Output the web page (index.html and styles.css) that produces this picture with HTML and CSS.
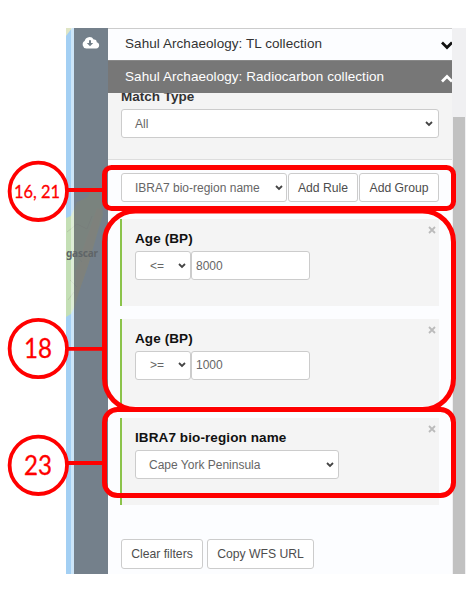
FILE: index.html
```
<!DOCTYPE html>
<html lang="en">
<head>
<meta charset="utf-8">
<title>Sahul Archaeology filters</title>
<link rel="stylesheet" href="styles.css">
</head>
<body>
<div class="app">
  <div class="map">
    <svg class="terrain" width="42" height="546" viewBox="66 28 42 546">
      <rect x="66" y="28" width="42" height="546" fill="#a3cff3"/>
      <path d="M66 28H72L66 36Z" fill="#dfe5c5"/>
      <path d="M66 218L71 216 77 202 88 197 92 187 95 186 99 192 102 204 103 215 99 228 94 245 87 269 80 289 75 306 71 314 66 317Z" fill="#c4dfb5"/>
      <path d="M97 208L102 210 98 228 89 262 79 291 75 302 76 270Z" fill="#d8d8ab"/>
      <path d="M67 232L77 224 87 229 92 216M66 258L74 252 82 262M70 280L77 287M68 300L74 292" fill="none" stroke="#b6c8a8"/>
    </svg>
    <div class="edge"></div>
    <div class="rail">
      <svg class="cloud" width="18" height="13" viewBox="0 0 18 13"><path d="M4.3 12.5A4 4 0 0 1 2.6 5.1 5 5 0 0 1 11.7 3.4 2.8 2.8 0 0 1 14.7 6.2 3.2 3.2 0 0 1 14.2 12.5Z" fill="#fff"/><path d="M7 4.2H9V7H11.2L8 10.3 4.8 7H7Z" fill="#74808a"/></svg>
    </div>
    <span class="place">gascar</span>
  </div>
  <main class="panel">
    <header class="bar"><span>Sahul Archaeology: TL collection</span><svg class="toggle" width="11" height="9" viewBox="0 0 11 9"><path d="M1 1.5L6 6.5 11 1.5"/></svg></header>
    <header class="bar active"><span>Sahul Archaeology: Radiocarbon collection</span><svg class="toggle" width="11" height="9" viewBox="0 0 11 9"><path d="M1 7.5L6 2.5 11 7.5"/></svg></header>
    <section class="match">
      <label>Match Type</label>
      <div class="field"><span>All</span><svg class="chev" viewBox="0 0 8 6"><path d="M1 1L4 4 7 1"/></svg></div>
    </section>
    <section class="builder">
      <div class="tools">
        <div class="field attr"><span>IBRA7 bio-region name</span><svg class="chev" viewBox="0 0 8 6"><path d="M1 1L4 4 7 1"/></svg></div>
        <button class="add-rule">Add Rule</button>
        <button class="add-group">Add Group</button>
      </div>
      <article class="rule">
        <div class="title"><h3>Age (BP)</h3><svg class="close" viewBox="0 0 8 8"><path d="M1 1L7 7M7 1L1 7"/></svg></div>
        <div class="inputs"><div class="field op"><span>&lt;=</span><svg class="chev" viewBox="0 0 8 6"><path d="M1 1L4 4 7 1"/></svg></div><div class="field value">8000</div></div>
      </article>
      <article class="rule">
        <div class="title"><h3>Age (BP)</h3><svg class="close" viewBox="0 0 8 8"><path d="M1 1L7 7M7 1L1 7"/></svg></div>
        <div class="inputs"><div class="field op"><span>&gt;=</span><svg class="chev" viewBox="0 0 8 6"><path d="M1 1L4 4 7 1"/></svg></div><div class="field value">1000</div></div>
      </article>
      <article class="rule">
        <div class="title"><h3>IBRA7 bio-region name</h3><svg class="close" viewBox="0 0 8 8"><path d="M1 1L7 7M7 1L1 7"/></svg></div>
        <div class="inputs"><div class="field region"><span>Cape York Peninsula</span><svg class="chev" viewBox="0 0 8 6"><path d="M1 1L4 4 7 1"/></svg></div></div>
      </article>
      <footer class="actions"><button class="clear">Clear filters</button><button class="copy">Copy WFS URL</button></footer>
    </section>
  </main>
  <div class="scroll"><div class="thumb"></div></div>
</div>
<svg class="callouts" width="475" height="590" viewBox="0 0 475 590">
  <g class="outline">
    <rect x="104.5" y="167.5" width="349" height="41" rx="7"/>
    <rect x="104.5" y="211" width="349" height="198.5" rx="31"/>
    <rect x="104.5" y="409.5" width="349" height="86" rx="13"/>
  </g>
  <g class="ring">
    <path d="M67 190H103M67 348.8H103M67 463H103"/>
    <circle cx="38.3" cy="191.3" r="28.7"/>
    <circle cx="38.3" cy="348.5" r="28.7"/>
    <circle cx="38.3" cy="465.3" r="28.7"/>
  </g>
  <g class="number">
    <text class="small" x="14" y="198" textLength="46" lengthAdjust="spacingAndGlyphs">16, 21</text>
    <text x="24" y="358" textLength="28" lengthAdjust="spacingAndGlyphs">18</text>
    <text x="24" y="475" textLength="28" lengthAdjust="spacingAndGlyphs">23</text>
  </g>
</svg>
</body>
</html>
```
FILE: styles.css
```
* { box-sizing: border-box; }
body { margin: 0; width: 475px; height: 590px; background: #fff; font: 12px "Liberation Sans", Arial, sans-serif; color: #666; overflow: hidden; position: relative; }
.app { display: flex; width: 400px; height: 546px; margin: 28px 0 0 66px; }
.map { width: 42px; position: relative; flex: none; }
.terrain { display: block; }
.edge { position: absolute; left: 5px; top: 0; width: 3px; height: 546px; background: rgba(255,255,255,.45); }
.rail { position: absolute; left: 8px; top: 0; width: 34px; height: 546px; background: rgba(104,108,112,.8); }
.cloud { display: block; margin: 8px 0 0 8px; }
.place { position: absolute; left: 0; top: 218px; font: bold 10px "Noto Sans", sans-serif; letter-spacing: -.2px; color: #5f6568; }
.panel { width: 344px; flex: none; background: #fcfdff; }
.bar { display: flex; align-items: center; justify-content: space-between; height: 32px; padding: 0 0 2px 17px; background: #fcfdff; border-top: 1px solid #ccc; color: #333; font-size: 13.5px; letter-spacing: .06px; }
.bar.active { height: 33px; background: #777; border-color: #888; color: #fff; }
.toggle { fill: none; stroke: #111; stroke-width: 2.7; margin-top: 4px; }
.active .toggle { stroke: #fff; }
.match { height: 67px; background: #f4f4f4; border-bottom: 1px solid #ddd; padding: 0 13px; overflow: hidden; }
.match label { display: block; height: 16px; margin-top: -4px; line-height: 16px; font-size: 13.5px; font-weight: bold; color: #333; }
.field { display: flex; align-items: center; justify-content: space-between; height: 29px; padding: 0 5px 0 13px; background: #fff; border: 1px solid #ccc; border-radius: 3px; white-space: nowrap; }
.match .field { margin-top: 4px; }
.chev { width: 8px; height: 6px; flex: none; fill: none; stroke: #444; stroke-width: 1.8; }
.builder { padding: 13px 13px 0; }
.tools { display: flex; gap: 1px; margin-bottom: 17px; }
.tools .attr { width: 166px; height: 29px; padding-right: 3px; }
button { height: 29px; padding: 0; background: #fff; border: 1px solid #ccc; border-radius: 3px; color: #4d4d4d; font: 12.2px "Liberation Sans", Arial, sans-serif; white-space: nowrap; }
.add-rule { width: 70px; }
.add-group { width: 80px; }
.rule { height: 87px; margin: 0 0 12.7px -1px; padding: 0 0 0 13px; background: #f4f4f4; border-left: 2px solid #8bc34a; }
.title { display: flex; justify-content: space-between; align-items: flex-start; height: 32px; padding: 7px 3px 0 0; }
h3 { margin: 5px 0 0; font-size: 13.5px; line-height: 16px; letter-spacing: .1px; color: #111; }
.close { width: 8px; height: 8px; fill: none; stroke: #bbb; stroke-width: 1.8; }
.inputs { display: flex; }
.op { width: 56px; padding: 0 4px 0 14px; }
.value { width: 119px; padding: 0 4px; }
.region { width: 204px; padding-right: 4px; }
.actions { display: flex; gap: 4px; margin-top: 34px; }
.clear { width: 82px; height: 30px; }
.copy { width: 107px; height: 30px; }
.scroll { width: 14px; flex: none; background: #f0f0f2; padding: 89px 1.5px 0 1px; }
.thumb { height: 457px; background: #c1c1c1; }
.callouts { position: absolute; left: 0; top: 0; pointer-events: none; }
.outline { fill: none; stroke: #f00; stroke-width: 5; }
.ring { fill: #fff; stroke: #f00; stroke-width: 3.8; }
.number { fill: #f00; stroke: #f00; stroke-width: .3; font: 27px Lato, sans-serif; }
.small { font-size: 18px; }
```
